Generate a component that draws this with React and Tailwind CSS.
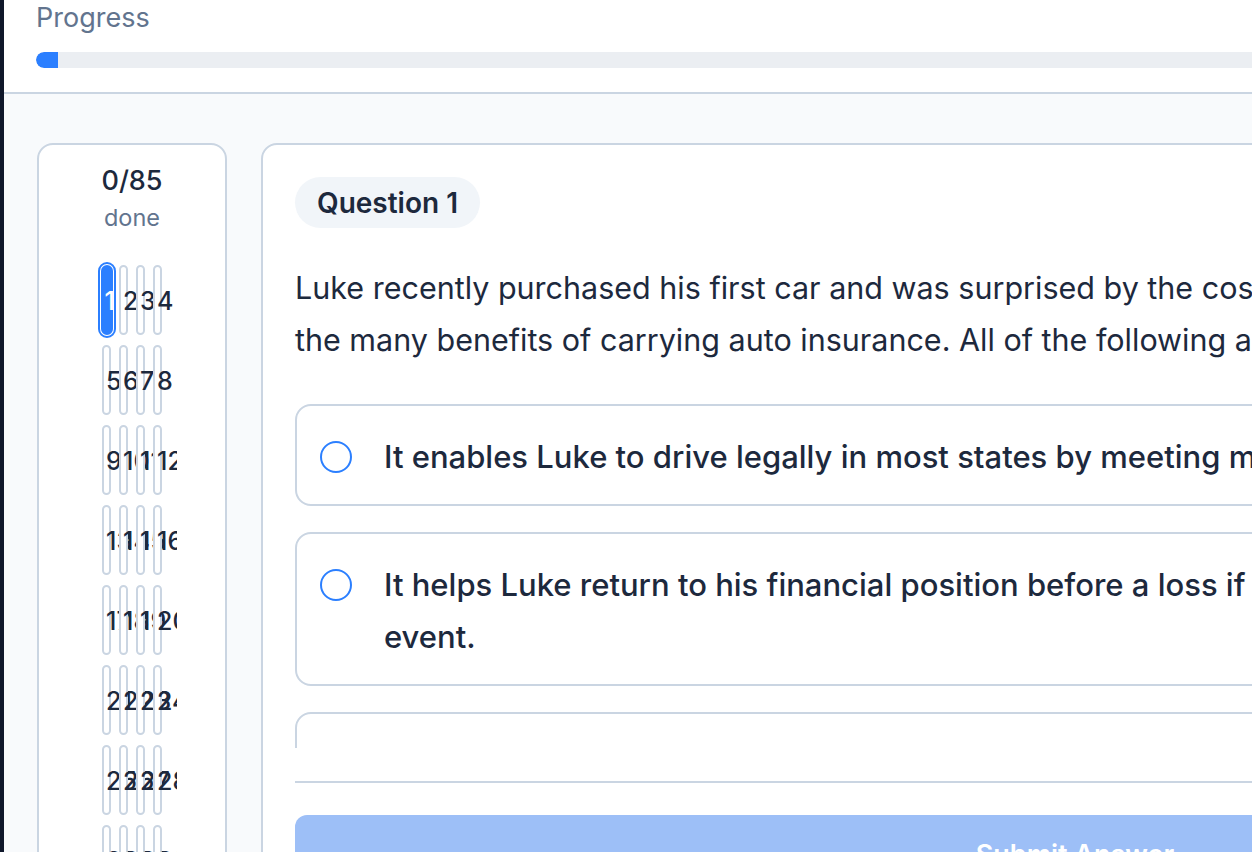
const NUMS = Array.from({ length: 85 }, (_, i) => i + 1);

function Pill({ n, active }) {
  if (active) {
    return (
      <button className="h-[70px] w-[12px] -mx-[1.5px] rounded-full border-2 border-blue-500 bg-blue-500 pl-[2px] pt-[3px] flex items-center text-[25px] font-medium text-white whitespace-nowrap outline-2 outline-offset-1 outline-blue-500">
        <span>{n}</span>
      </button>
    );
  }
  return (
    <button className="h-[70px] w-[9px] rounded-full border-2 border-slate-300 bg-white pl-[2px] pt-[3px] flex items-center text-[25px] font-medium text-slate-800 whitespace-nowrap">
      <span>{n}</span>
    </button>
  );
}

function Option({ children }) {
  return (
    <div className="flex items-start gap-[32px] rounded-2xl border-2 border-slate-300 bg-white pl-[23px] pr-8 pt-[25px] pb-[21px]">
      <span className="mt-[10px] h-8 w-8 shrink-0 rounded-full border-2 border-blue-500" />
      <p className="text-[31px] leading-[52px] font-medium text-slate-800 whitespace-nowrap">{children}</p>
    </div>
  );
}

export default function App() {
  return (
    <div className="w-[1252px] h-[852px] overflow-hidden flex font-['Inter',sans-serif]">
      <div className="w-[4px] shrink-0 bg-[#0f172a]" />
      <div className="w-[1921px] shrink-0 flex flex-col bg-slate-50">
        <header className="h-[94px] shrink-0 bg-white border-b-2 border-slate-300 pl-[32px] pr-[32px]">
          <div className="pt-[2px] text-[27px] leading-[32px] text-slate-500">Progress</div>
          <div className="mt-[18px] h-4 rounded-full bg-[#ebeef2] overflow-hidden">
            <div className="h-4 w-[22px] rounded-l-full bg-blue-500" />
          </div>
        </header>

        <main className="flex items-start gap-[34px] pl-[33px] pt-[49px]">
          <aside className="w-[190px] shrink-0 rounded-2xl border-2 border-slate-300 bg-white pt-[20px]">
            <div className="text-center">
              <div className="text-[27px] leading-[32px] font-medium text-slate-800">0/85</div>
              <div className="text-[23.5px] leading-[28px] text-slate-500 mt-[7px]">done</div>
            </div>
            <div className="mx-auto mt-[30px] w-[90px] overflow-hidden py-[3px]">
              <div className="mx-auto grid w-[60px] grid-cols-[9px_9px_9px_9px] gap-x-[8px] gap-y-[10px]">
                {NUMS.map((n) => <Pill key={n} n={n} active={n === 1} />)}
              </div>
            </div>
          </aside>

          <section className="w-[1628px] shrink-0 rounded-2xl border-2 border-slate-300 bg-white p-[32px]">
            <span className="inline-flex h-[51px] items-center rounded-full bg-slate-100 px-[22px] text-[28px] font-semibold text-slate-800">
              Question 1
            </span>
            <p className="mt-[34px] text-[30.5px] leading-[52px] text-slate-800">
              Luke recently purchased his first car and was surprised by the cost of coverage. His agent explained<br />
              the many benefits of carrying auto insurance. All of the following are benefits EXCEPT:
            </p>

            <div className="mt-[38px] h-[344px] overflow-hidden flex flex-col gap-[26px]">
              <Option>It enables Luke to drive legally in most states by meeting minimum financial responsibility laws.</Option>
              <Option>
                It helps Luke return to his financial position before a loss if he is involved in a covered<br />
                event.
              </Option>
              <Option>It guarantees that Luke's premium will never increase after he files a claim.</Option>
            </div>

            <div className="mt-[33px] border-t-2 border-slate-300 pt-[32px]">
              <button className="w-full rounded-xl bg-[#9dbff7] py-6 text-[27px] leading-[32px] font-semibold text-white">
                Submit Answer
              </button>
            </div>
          </section>
        </main>
      </div>
    </div>
  );
}
